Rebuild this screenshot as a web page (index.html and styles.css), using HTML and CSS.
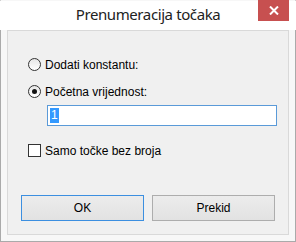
FILE: index.html
```html
<!DOCTYPE html>
<html lang="hr">
<head>
	<meta charset="UTF-8">
	<title>Prenumeracija točaka</title>
	<link rel="stylesheet" href="styles.css">
</head>
<body>
<div class="window">
	<div class="titlebar">
		<span class="title">Prenumeracija točaka</span>
		<a href="javascript:;" class="close">
			<svg width="10" height="9" viewBox="0 0 10 9"><path d="M1 0.5 L9 8.5 M9 0.5 L1 8.5" stroke="#fff" stroke-width="2"/></svg>
		</a>
	</div>
	<div class="panel">
		<label class="option"><span class="radio"></span>Dodati konstantu:</label>
		<label class="option second"><span class="radio checked"></span>Početna vrijednost:</label>
		<div class="field"><span class="sel">1</span></div>
		<label class="option check"><span class="box"></span>Samo točke bez broja</label>
		<div class="buttons">
			<a href="javascript:;" class="btn default">OK</a>
			<a href="javascript:;" class="btn">Prekid</a>
		</div>
	</div>
</div>
</body>
</html>
```

FILE: styles.css
```css
body, p, div {
	margin: 0;
	padding: 0;
}
html, body {
	width: 100%;
	background: #fff;
	font: 12px/1 "Liberation Sans", Arial, sans-serif;
	color: #000;
}
a { text-decoration: none; color: #000; }

.window {
	position: relative;
	width: 296px;
	height: 242px;
	box-sizing: border-box;
	border: 1px solid #aaaaaa;
	border-top-color: #f7f7f7;
	background: #f7f7f7;
}
.titlebar {
	height: 29px;
	background: #fff;
	margin: 0 -1px;
	display: flex;
	justify-content: center;
	align-items: center;
}
.title {
	font: 15px/1 "Noto Sans", "Open Sans", sans-serif;
	letter-spacing: -0.4px;
	color: #222;
	margin-top: -2px;
}
.close {
	position: absolute;
	top: -1px;
	right: 6px;
	width: 31px;
	height: 21px;
	background: #c75050;
	display: flex;
	justify-content: center;
	align-items: center;
}

.panel {
	margin: 0 6px;
	height: 205px;
	box-sizing: border-box;
	border: 1px solid #d9d9d9;
	background: #f0f0f0;
	padding: 27px 0 0 20px;
}
.option {
	display: flex;
	align-items: center;
	height: 13px;
}
.option.second { margin-top: 14px; }
.radio, .box {
	width: 13px;
	height: 13px;
	box-sizing: border-box;
	border: 1px solid #333;
	background: #fff;
	margin-right: 4px;
	position: relative;
}
.radio {
	border-radius: 50%;
	background: linear-gradient(#e6e6e6, #fff);
}
.radio.checked:after {
	content: '';
	position: absolute;
	left: 3px;
	top: 3px;
	width: 5px;
	height: 5px;
	border-radius: 50%;
	background: #111;
}
.field {
	margin: 7px 0 0 19px;
	width: 230px;
	height: 21px;
	box-sizing: border-box;
	border: 1px solid #5a9ad8;
	background: #fff;
	padding: 2px 0 0 2px;
}
.sel {
	display: inline-block;
	height: 15px;
	line-height: 15px;
	padding: 0 1px;
	background: #3399ff;
	color: #fff;
}
.option.check { margin-top: 18px; }

.buttons {
	display: flex;
	gap: 8px;
	margin: 38px 0 0 -7px;
}
.btn {
	width: 123px;
	height: 26px;
	box-sizing: border-box;
	border: 1px solid #adadad;
	background: linear-gradient(#ececec, #e2e2e2);
	display: flex;
	justify-content: center;
	align-items: center;
}
.btn.default {
	border-color: #3c8fe0;
}
```
